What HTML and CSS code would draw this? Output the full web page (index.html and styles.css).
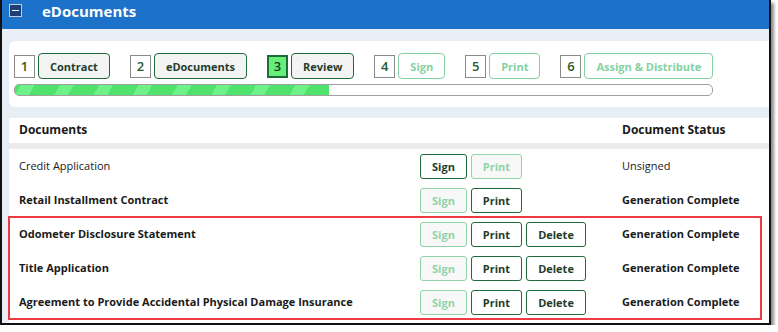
FILE: index.html
```html
<!DOCTYPE html>
<html lang="en">
<head>
    <meta charset="UTF-8">
    <meta name="viewport" content="width=device-width, initial-scale=1.0">
    <title>eDocuments</title>
    <link rel="stylesheet" href="styles.css">
</head>
<body>
    <div class="frame">
        <div class="panelHead">
            <span class="toggle"></span>
            <span class="panelTitle">eDocuments</span>
        </div>
        <div class="panelBody">
            <div class="stepsCard">
                <div class="steps">
                    <div class="step"><span class="stepNum">1</span><button class="stepBtn">Contract</button></div>
                    <div class="step"><span class="stepNum">2</span><button class="stepBtn">eDocuments</button></div>
                    <div class="step"><span class="stepNum current">3</span><button class="stepBtn">Review</button></div>
                    <div class="step"><span class="stepNum">4</span><button class="stepBtn disabled">Sign</button></div>
                    <div class="step"><span class="stepNum">5</span><button class="stepBtn disabled">Print</button></div>
                    <div class="step"><span class="stepNum">6</span><button class="stepBtn disabled">Assign &amp; Distribute</button></div>
                </div>
                <div class="progress"><div class="progressFill" style="width: 45%;"></div></div>
            </div>
            <div class="docs">
                <div class="docRow docHead">
                    <span class="docName">Documents</span>
                    <span></span>
                    <span class="docStatus">Document Status</span>
                </div>
                <div class="docRow">
                    <span class="docName normal">Credit Application</span>
                    <span class="actions"><button class="btn">Sign</button><button class="btn disabled">Print</button></span>
                    <span class="docStatus normal">Unsigned</span>
                </div>
                <div class="docRow">
                    <span class="docName">Retail Installment Contract</span>
                    <span class="actions"><button class="btn disabled">Sign</button><button class="btn">Print</button></span>
                    <span class="docStatus">Generation Complete</span>
                </div>
                <div class="highlight">
                    <div class="docRow">
                        <span class="docName">Odometer Disclosure Statement</span>
                        <span class="actions"><button class="btn disabled">Sign</button><button class="btn">Print</button><button class="btn">Delete</button></span>
                        <span class="docStatus">Generation Complete</span>
                    </div>
                    <div class="docRow">
                        <span class="docName">Title Application</span>
                        <span class="actions"><button class="btn disabled">Sign</button><button class="btn">Print</button><button class="btn">Delete</button></span>
                        <span class="docStatus">Generation Complete</span>
                    </div>
                    <div class="docRow">
                        <span class="docName">Agreement to Provide Accidental Physical Damage Insurance</span>
                        <span class="actions"><button class="btn disabled">Sign</button><button class="btn">Print</button><button class="btn">Delete</button></span>
                        <span class="docStatus">Generation Complete</span>
                    </div>
                </div>
            </div>
        </div>
    </div>
</body>
</html>
```

FILE: styles.css
```css
body {
    margin: 0;
    background: white;
    font-family: "Open Sans", Arial, sans-serif;
    color: #1a1a1a;
}
.frame {
    width: 767px;
    height: 323px;
    overflow: hidden;
    border: 2px solid #111;
    border-top: none;
    box-shadow: 3px 3px 3px rgba(0,0,0,0.45);
    background: #e8eef6;
}
.panelHead {
    height: 29px;
    background: #1c72c8;
    display: flex;
    align-items: center;
    padding-left: 7px;
}
.toggle {
    width: 11px;
    height: 11px;
    border: 1px solid #c3cbd8;
    background: #1d3f78;
    position: relative;
    margin-top: -9px;
}
.toggle::after {
    content: "";
    position: absolute;
    left: 2px;
    right: 2px;
    top: 5px;
    height: 1px;
    background: white;
}
.panelTitle {
    color: white;
    font-weight: bold;
    font-size: 15px;
    margin-left: 20px;
    margin-top: -7px;
}
.panelBody {
    padding: 12px 0 0 7px;
}
.stepsCard {
    background: white;
    border-radius: 6px 0 0 6px;
    padding: 12px 0 11px 5px;
}
.steps {
    display: flex;
    gap: 20px;
}
.step {
    display: flex;
    align-items: center;
    gap: 3px;
}
.stepNum {
    width: 19px;
    height: 21px;
    border: 1px solid #8a8a8a;
    display: flex;
    align-items: center;
    justify-content: center;
    font-size: 13px;
    font-weight: 600;
    color: #2f5a28;
}
.stepNum.current {
    width: 17px;
    height: 19px;
    border: 2px solid #1d6b36;
    background: #66f07a;
    color: #1a3a1a;
}
.stepBtn {
    height: 26px;
    padding: 0 11px;
    border: 1px solid #1e6b3d;
    border-radius: 4px;
    background: #f3f3f3;
    font-family: inherit;
    font-weight: bold;
    font-size: 11px;
    color: #1f3d2c;
}
.stepBtn.disabled {
    background: white;
    border-color: #84d2a2;
    color: #84d2a2;
}
.progress {
    margin-top: 5px;
    width: 697px;
    height: 10px;
    border: 1px solid #a0a0a0;
    border-radius: 5px;
    overflow: hidden;
}
.progressFill {
    height: 100%;
    background: #4fe36b repeating-linear-gradient(-60deg, #4fe36b 0 22px, #6ff18a 22px 34px);
}
.docs {
    margin-top: 11px;
    background: white;
    height: 210px;
}
.docRow {
    display: grid;
    grid-template-columns: 401px 202px 1fr;
    align-items: center;
    height: 34px;
    padding-left: 10px;
    font-size: 11px;
    font-weight: bold;
}
.docRow > span {
    margin-top: -2px;
}
.docRow > .actions {
    margin-top: 0;
}
.docHead {
    height: 25px;
    font-size: 12px;
    border-bottom: 6px solid #ebebeb;
}
.normal {
    font-weight: normal;
}
.actions {
    display: flex;
    gap: 4px;
}
.btn {
    height: 25px;
    padding: 0 11px;
    border: 1px solid #1e6b3d;
    border-radius: 3px;
    background: white;
    font-family: inherit;
    font-weight: bold;
    font-size: 11px;
    color: #1f3d2c;
}
.btn.disabled {
    background: #f8f8f8;
    border-color: #8fd4a9;
    color: #8fd4a9;
}
.highlight {
    width: 752px;
    outline: 2px solid #ee3a42;
    outline-offset: -1px;
}
```
